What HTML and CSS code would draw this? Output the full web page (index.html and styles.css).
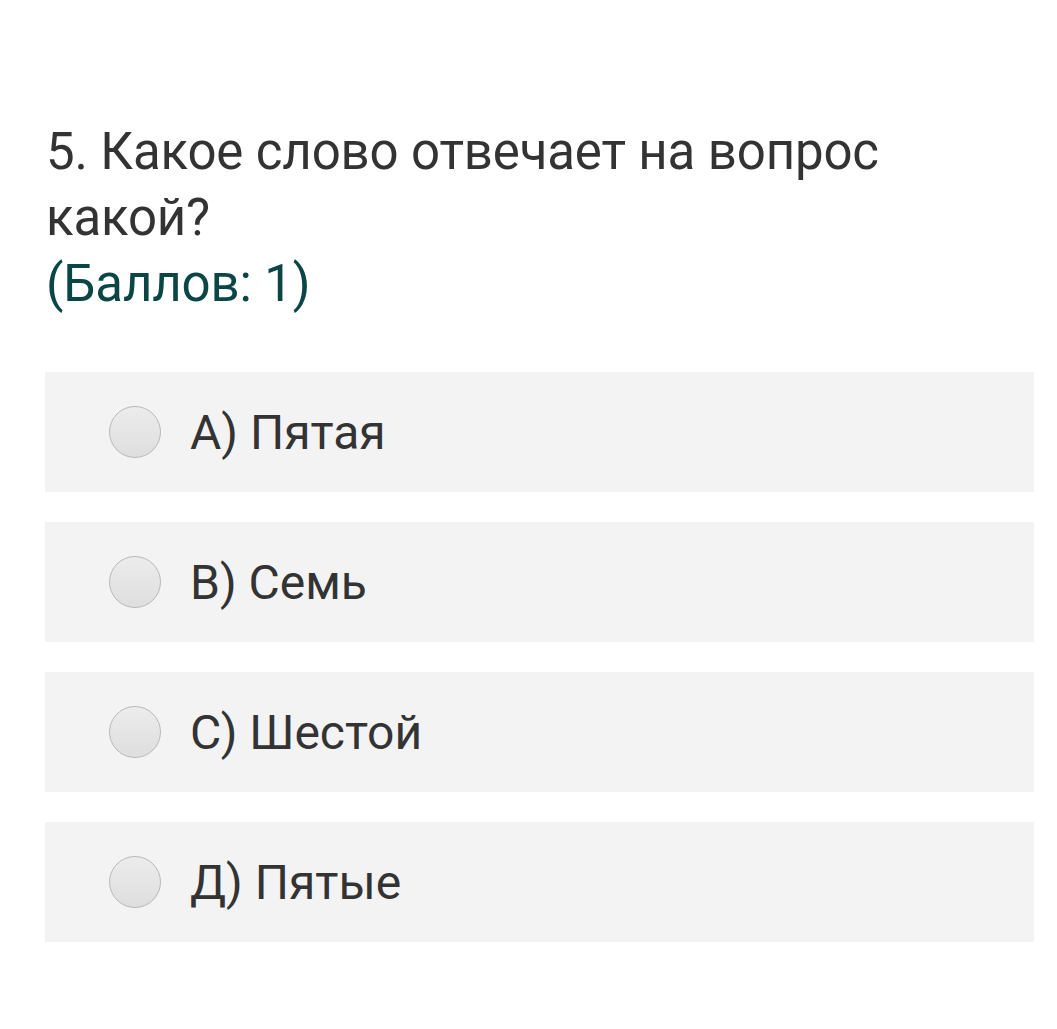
FILE: index.html
```html
<!DOCTYPE html>
<html lang="ru">
<head>
<meta charset="utf-8">
<link rel="stylesheet" href="styles.css">
</head>
<body>
<div class="page">
  <div class="question">
    <div class="qtext">5. Какое слово отвечает на вопрос какой?</div>
    <div class="points">(Баллов: 1)</div>
  </div>
  <div class="options">
    <label class="option"><span class="radio"></span><span class="otext">А) Пятая</span></label>
    <label class="option"><span class="radio"></span><span class="otext">В) Семь</span></label>
    <label class="option"><span class="radio"></span><span class="otext">С) Шестой</span></label>
    <label class="option"><span class="radio"></span><span class="otext">Д) Пятые</span></label>
  </div>
</div>
</body>
</html>
```
FILE: styles.css
```css
html, body {
  margin: 0;
  padding: 0;
  background: #ffffff;
}
body {
  font-family: Roboto, "Noto Sans", sans-serif;
  color: #333333;
}
.page {
  padding: 119px 23px 0 45px;
}
.question {
  font-size: 51px;
  line-height: 66px;
  letter-spacing: -0.15px;
  padding-left: 1px;
  width: 880px;
}
.points {
  color: #0b4646;
}
.options {
  margin-top: 55px;
  display: flex;
  flex-direction: column;
  gap: 30px;
}
.option {
  display: flex;
  align-items: center;
  height: 120px;
  background: #f3f3f3;
  padding-left: 64px;
  box-sizing: border-box;
}
.radio {
  width: 50px;
  height: 50px;
  border-radius: 50%;
  border: 1px solid #b9b9b9;
  background: linear-gradient(#ececec, #dedede);
  flex: none;
}
.otext {
  margin-left: 29px;
  font-size: 48px;
  line-height: 1;
  padding-top: 2px;
}
```
